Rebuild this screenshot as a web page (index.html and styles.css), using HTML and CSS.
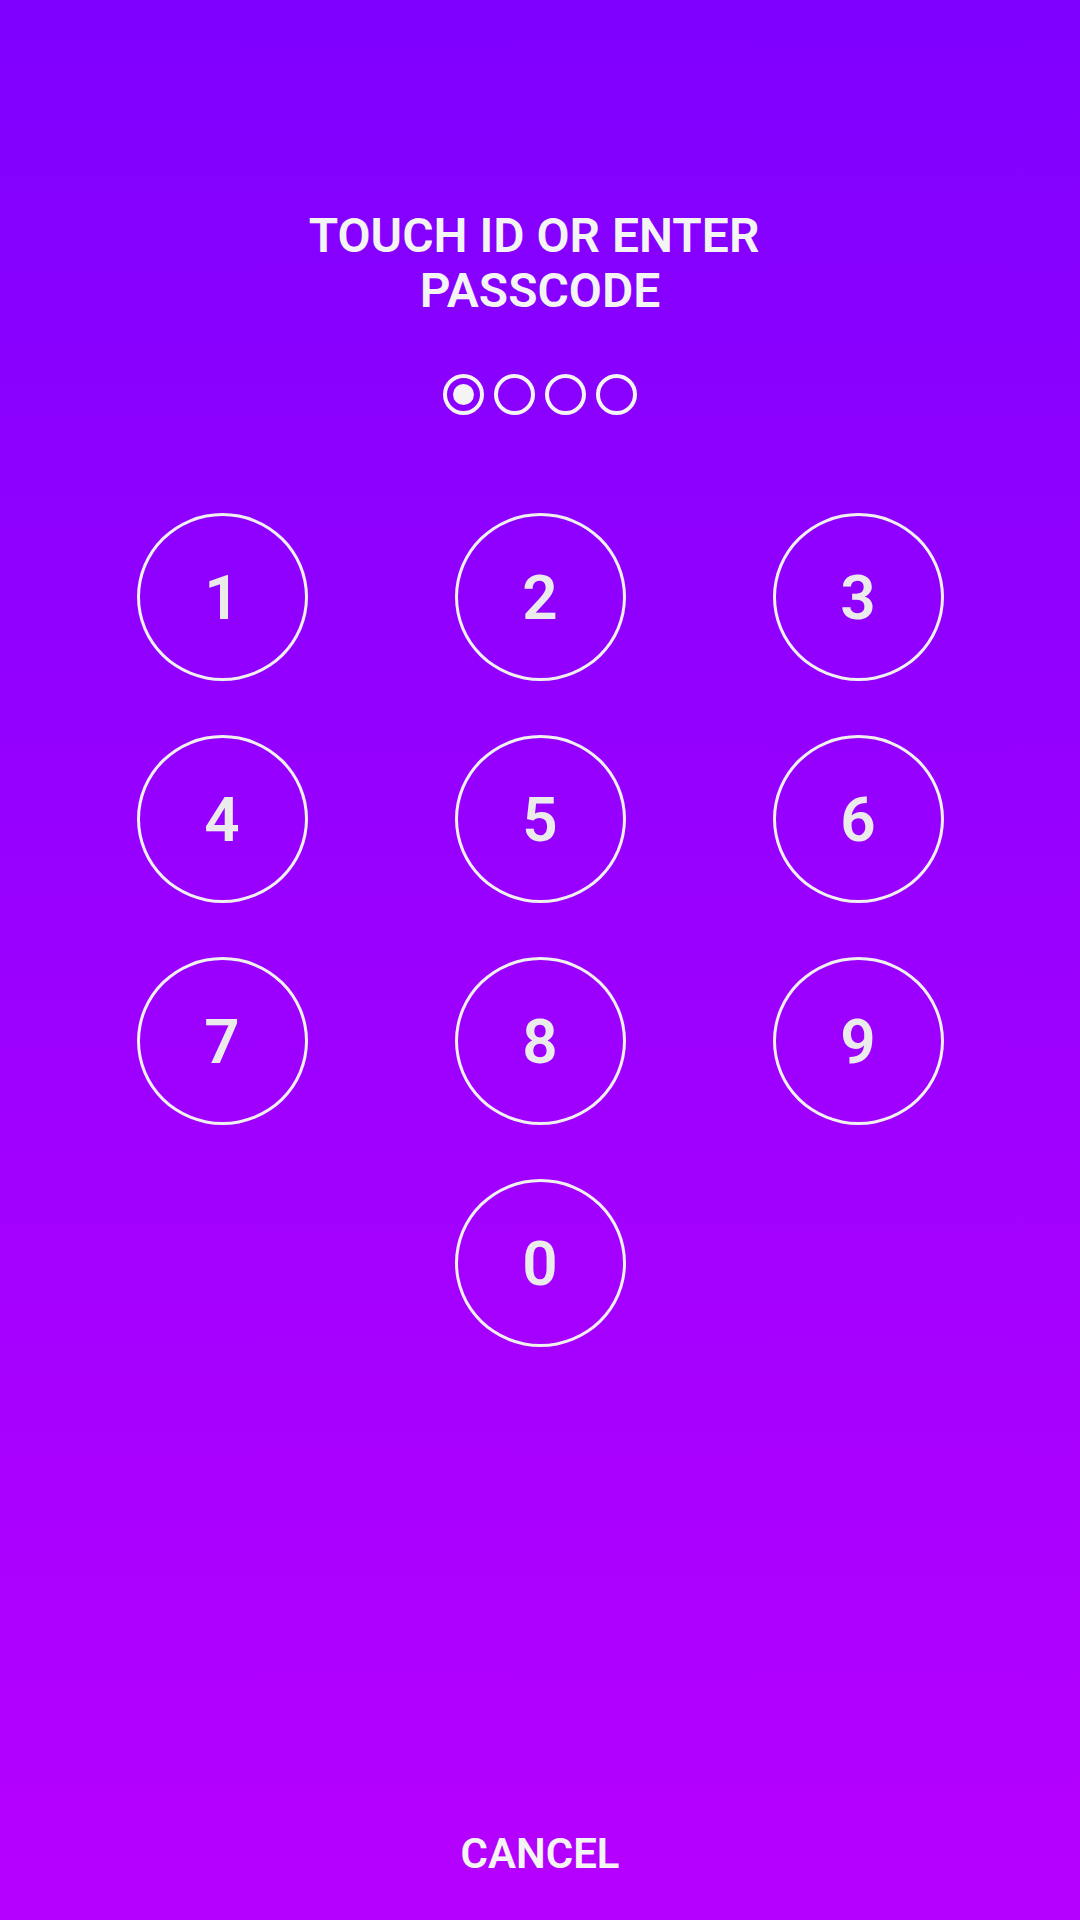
FILE: index.html
```html
<!DOCTYPE html>
<html>
<head>
<meta charset="utf-8">
<link rel="stylesheet" href="styles.css">
</head>
<body>
<div class="screen">
  <h1 class="title">TOUCH ID OR ENTER&nbsp;<br>PASSCODE</h1>
  <div class="dots">
    <span class="dot filled"></span>
    <span class="dot"></span>
    <span class="dot"></span>
    <span class="dot"></span>
  </div>
  <div class="keypad">
    <button class="key">1</button>
    <button class="key">2</button>
    <button class="key">3</button>
    <button class="key">4</button>
    <button class="key">5</button>
    <button class="key">6</button>
    <button class="key">7</button>
    <button class="key">8</button>
    <button class="key">9</button>
    <button class="key zero">0</button>
  </div>
  <div class="cancel">CANCEL</div>
</div>
</body>
</html>
```

FILE: styles.css
```css
html, body {
  margin: 0;
  padding: 0;
}
body {
  width: 1080px;
  height: 1920px;
  background: linear-gradient(to bottom, #7f00ff 0%, #b600ff 100%);
  font-family: Roboto, "Liberation Sans", sans-serif;
  overflow: hidden;
}
.screen {
  height: 1920px;
  box-sizing: border-box;
  display: flex;
  flex-direction: column;
  align-items: center;
  padding-top: 208px;
  padding-bottom: 41px;
}
.title {
  margin: 0;
  font-size: 48px;
  line-height: 55px;
  font-weight: 600;
  color: #f4f4f4;
  text-align: center;
}
.dots {
  margin-top: 56px;
  display: flex;
  gap: 10px;
}
.dot {
  width: 41px;
  height: 41px;
  box-sizing: border-box;
  border: 4px solid #f4f4f4;
  border-radius: 50%;
  display: flex;
  align-items: center;
  justify-content: center;
}
.dot.filled::after {
  content: "";
  width: 21px;
  height: 21px;
  border-radius: 50%;
  background: #f4f4f4;
}
.keypad {
  margin-top: 98px;
  display: grid;
  grid-template-columns: repeat(3, 171px);
  grid-auto-rows: 168px;
  column-gap: 147px;
  row-gap: 54px;
}
.key {
  width: 171px;
  height: 168px;
  box-sizing: border-box;
  border: 3px solid #f0f0f0;
  border-radius: 50%;
  background: transparent;
  color: #ebebeb;
  font-family: Roboto, "Liberation Sans", sans-serif;
  font-size: 62px;
  font-weight: 600;
  padding: 0;
  display: flex;
  align-items: center;
  justify-content: center;
}
.key.zero {
  grid-column: 2;
}
.cancel {
  margin-top: auto;
  font-size: 42px;
  line-height: 50px;
  font-weight: 600;
  color: #f4f4f4;
}
```
